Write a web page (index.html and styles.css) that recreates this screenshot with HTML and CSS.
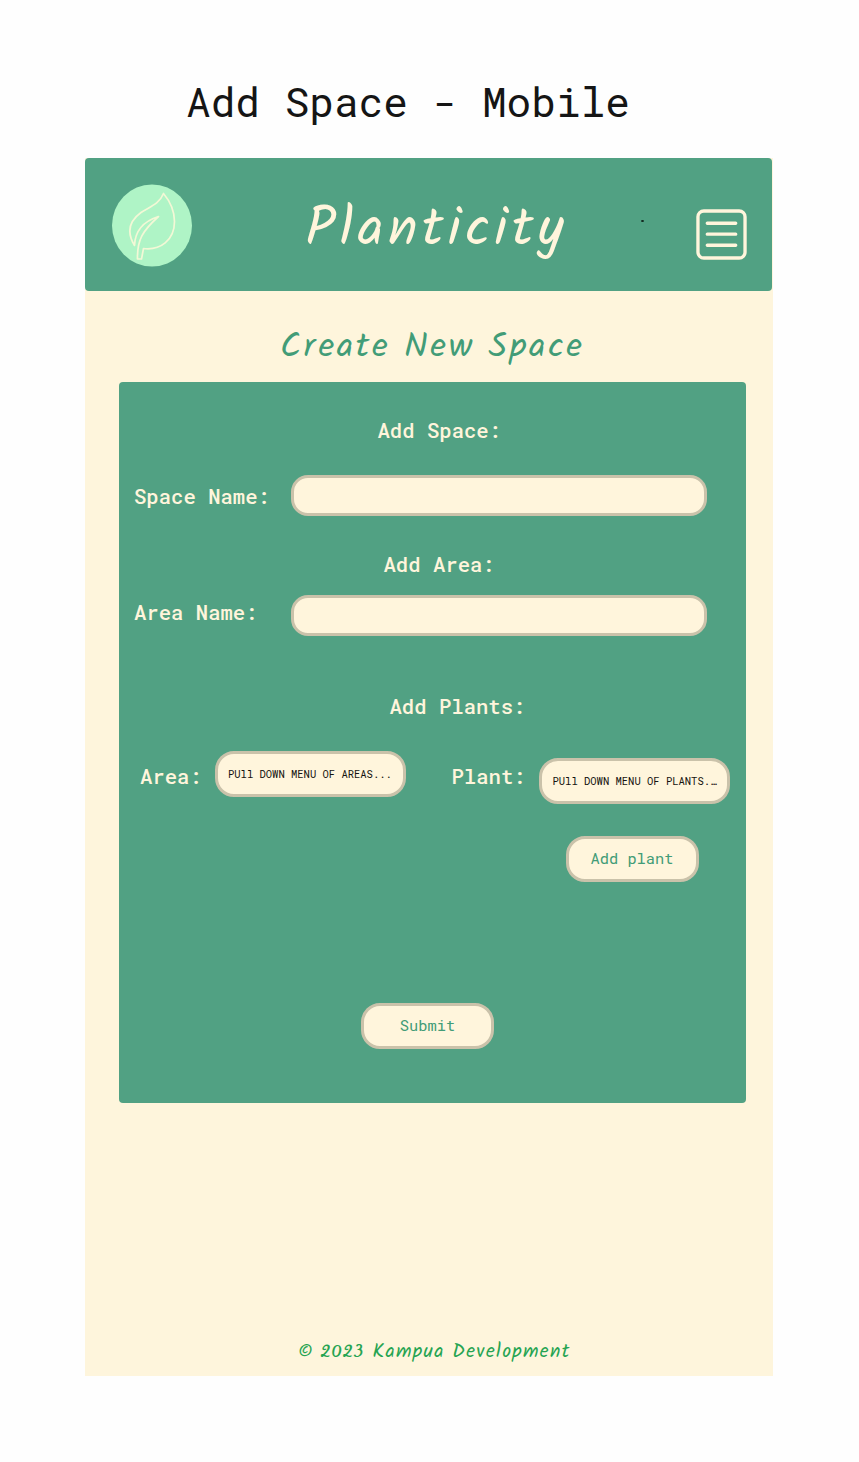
FILE: index.html
```html
<!DOCTYPE html>
<html lang="en">
<head>
<meta charset="utf-8">
<title>Add Space - Mobile</title>
<link rel="stylesheet" href="styles.css">
</head>
<body>
<h1 class="board-title">Add Space - Mobile</h1>
<main class="screen">
  <header class="header">
    <svg class="logo" viewBox="0 0 80 82">
      <ellipse cx="40" cy="41" rx="40" ry="41" fill="#aff4c6"/>
      <path d="M22.500 61C14 47 18 36 29 28C38 22 47 20 51.500 9C59 18 62.500 27 62.500 37C62.500 56 48 66 31.500 64L29.500 74.500H25.500C25 55 31 46 46.500 32C31 37 23 46 22.500 61Z" fill="none" stroke="#f3f8d6" stroke-width="1.7" stroke-linejoin="round"/>
    </svg>
    <div class="brand">Planticity</div>
    <span class="dot"></span>
    <svg class="menu" viewBox="0 0 52 52" fill="none" stroke="#fff5dc" stroke-linecap="round">
      <rect x="2" y="2" width="48" height="48" rx="6" stroke-width="3.4"/>
      <path d="M11.500 14.500H40.500M11.500 25.700H40.500M11.500 37H40.500" stroke-width="3.4"/>
    </svg>
  </header>
  <h2 class="subtitle">Create New Space</h2>
  <form class="panel">
    <h3 class="label heading space-heading">Add Space:</h3>
    <div class="row space-row"><label class="label" for="space">Space Name:</label><input class="field" id="space"></div>
    <h3 class="label heading area-heading">Add Area:</h3>
    <div class="row area-row"><label class="label" for="area">Area Name:</label><input class="field" id="area"></div>
    <h3 class="label heading plants-heading">Add Plants:</h3>
    <div class="pickers">
      <span class="label area-label">Area:</span>
      <div class="picker">PUll DOWN MENU OF AREAS...</div>
      <span class="label plant-label">Plant:</span>
      <div class="picker plant-picker">PUll DOWN MENU OF PLANTS.…</div>
    </div>
    <button class="button add" type="button">Add plant</button>
    <button class="button submit" type="button">Submit</button>
  </form>
  <footer class="footer">© 2023 Kampua Development</footer>
</main>
</body>
</html>
```
FILE: styles.css
```css
* { box-sizing: border-box; }
body { margin: 0; height: 1462px; background: #fefefe; font-family: "Roboto Mono", "Liberation Mono", monospace; overflow: hidden; }
h1, h2, h3 { margin: 0; font-weight: 400; }
.board-title { height: 158px; padding: 76px 0 0 186px; font-size: 41.100px; line-height: 50px; color: #151515; white-space: nowrap; }
.screen { width: 688px; height: 1218px; margin-left: 85px; background: #fef5dc; display: flex; flex-direction: column; }
.header { width: 687px; height: 133px; flex: none; display: flex; align-items: flex-start; background: #51a183; border-radius: 4px; padding: 26px 25px 0 27px; }
.logo { width: 80px; height: 83px; }
.brand { width: 290px; margin: 19px 0 0 113.500px; font: 400 55px/64px Solitreo, Caveat, cursive; letter-spacing: 4.500px; color: #fff5dc; white-space: nowrap; }
.dot { width: 3px; height: 2px; margin: 35.500px 0 0 45.500px; background: #10251d; border-radius: 50%; }
.menu { width: 51px; height: 51px; margin: 25px 0 0 auto; }
.subtitle { height: 91px; padding: 35.500px 0 0 195px; font: 400 35px/46px Solitreo, Caveat, cursive; letter-spacing: 2.600px; color: #429c77; white-space: nowrap; }
.panel { width: 626.500px; height: 721px; flex: none; margin-left: 34px; background: #51a183; border-radius: 4px; display: flex; flex-direction: column; }
.label { font-size: 20.600px; font-weight: 500; line-height: 28px; color: #fff5dc; white-space: nowrap; }
.heading { height: 28px; font-weight: 500; }
.space-heading { margin: 34px 0 0 258.500px; }
.area-heading { margin: 34px 0 0 264.500px; }
.plants-heading { margin: 56px 0 0 270.500px; }
.row { display: flex; align-items: center; height: 41px; padding-left: 15px; }
.row .label { width: 157px; }
.space-row { margin-top: 31px; }
.area-row { margin-top: 17px; }
.area-row .label { margin-top: -8px; }
.field { width: 416px; height: 41px; border: 3px solid #cac2aa; border-radius: 17px; background: #fff5dc; padding: 0 14px; }
.pickers { display: flex; align-items: flex-start; margin-top: 31px; padding-left: 21px; }
.area-label { width: 74.500px; margin-top: 11px; }
.plant-label { width: 87.500px; margin: 11px 0 0 46px; }
.picker { width: 191px; height: 46px; border: 3px solid #cac2aa; border-radius: 19px; background: #fff5dc; padding-left: 10.500px; font-size: 10.500px; line-height: 41px; color: #15130f; white-space: nowrap; }
.plant-picker { margin-top: 6.500px; }
.button { width: 133px; height: 46px; border: 3px solid #cac2aa; border-radius: 19px; background: #fff5dc; padding: 0 0 3px; font: 15.400px/20px "Roboto Mono", "Liberation Mono", monospace; color: #429c77; }
.add { margin: 32.500px 0 0 446.500px; }
.submit { margin: 121px 0 0 242px; }
.footer { margin: 237px 0 0 213px; font: 400 19.500px/28px Solitreo, Caveat, cursive; letter-spacing: 1.350px; color: #26a452; white-space: nowrap; }
```
